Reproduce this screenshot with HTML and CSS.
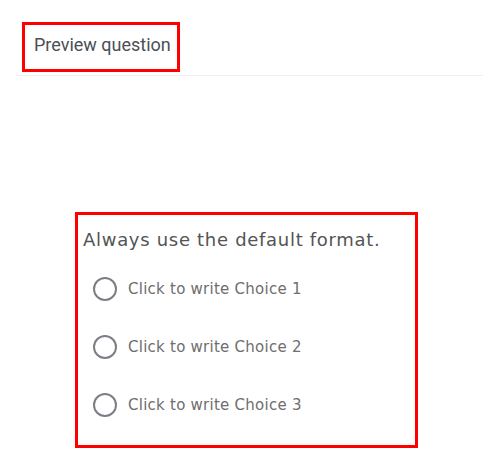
FILE: index.html
```html
<!DOCTYPE html>
<html>
<head>
<meta charset="utf-8">
<link rel="stylesheet" href="styles.css">
</head>
<body>
<div class="page">
  <header class="header">
    <div class="title-box">Preview question</div>
  </header>
  <main class="main">
    <section class="question">
      <div class="q-text">Always use the default format.</div>
      <ul class="choices">
        <li class="choice"><span class="radio"></span><span class="label">Click to write Choice 1</span></li>
        <li class="choice"><span class="radio"></span><span class="label">Click to write Choice 2</span></li>
        <li class="choice"><span class="radio"></span><span class="label">Click to write Choice 3</span></li>
      </ul>
    </section>
  </main>
</div>
</body>
</html>
```
FILE: styles.css
```css
html, body {
  margin: 0;
  padding: 0;
  background: #ffffff;
}
.page {
  width: 496px;
  height: 462px;
  overflow: hidden;
}
.header {
  margin: 0 13px 0 16px;
  padding-top: 22px;
  padding-bottom: 3px;
  border-bottom: 1px solid #efefef;
  display: flex;
}
.title-box {
  margin-left: 6px;
  height: 35px;
  width: 143px;
  padding: 9px 0 0 9px;
  border: 3px solid #ff0000;
  box-sizing: content-box;
  font-family: Roboto, "Liberation Sans", sans-serif;
  font-size: 18px;
  line-height: normal;
  color: #4b4f54;
  white-space: nowrap;
}
.main {
  padding-top: 136px;
  padding-left: 75px;
}
.question {
  width: 337px;
  height: 230px;
  border: 3px solid #ff0000;
  box-sizing: content-box;
}
.q-text {
  margin-top: 14px;
  margin-left: 5px;
  font-family: "DejaVu Sans", sans-serif;
  font-size: 18px;
  line-height: 22px;
  letter-spacing: 0.7px;
  color: #545454;
  white-space: nowrap;
}
.choices {
  list-style: none;
  margin: 26px 0 0 0;
  padding: 0 0 0 15px;
  display: flex;
  flex-direction: column;
  gap: 34px;
}
.choice {
  display: flex;
  align-items: center;
  height: 24px;
}
.radio {
  width: 20px;
  height: 20px;
  border: 2px solid #7b7f85;
  border-radius: 50%;
  flex: none;
}
.label {
  margin-left: 11px;
  font-family: "DejaVu Sans", sans-serif;
  font-size: 15px;
  letter-spacing: 0.25px;
  color: #6e6e6e;
  white-space: nowrap;
}
```
